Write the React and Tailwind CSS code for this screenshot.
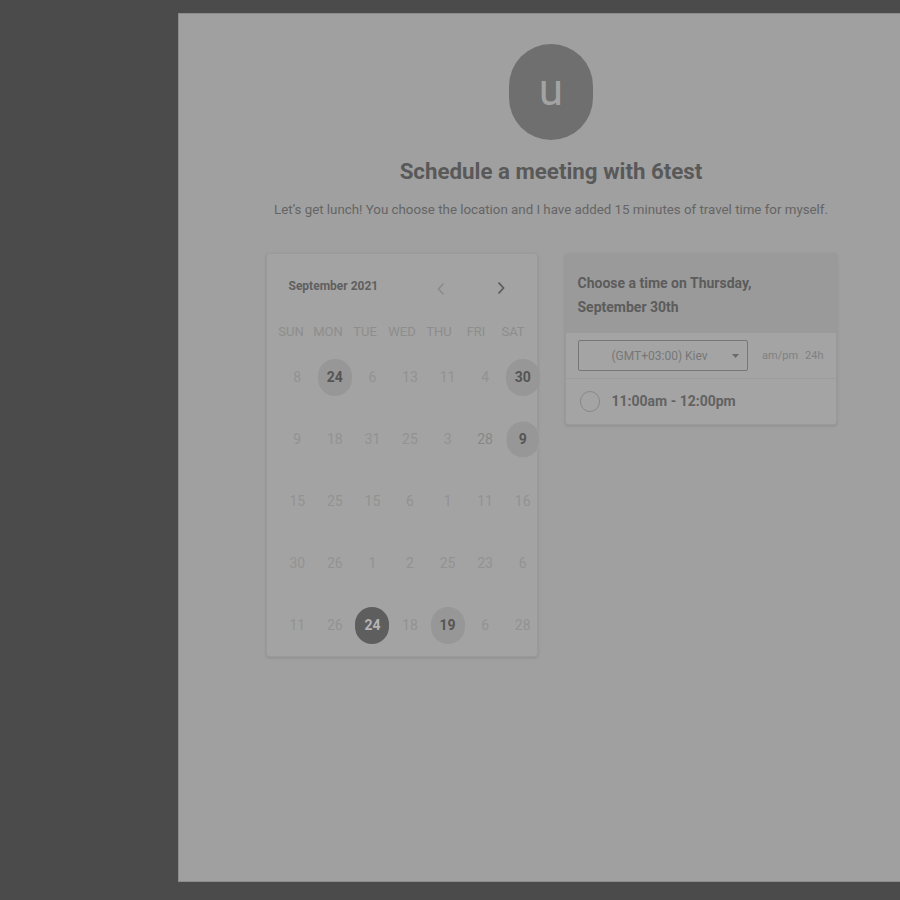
const weekdays = ["SUN", "MON", "TUE", "WED", "THU", "FRI", "SAT"];

// kind: "" faint, "a" available (light circle), "s" selected (dark circle), "d" a bit darker
const weeks = [
  [["8"], ["24", "a"], ["6"], ["13"], ["11"], ["4"], ["30", "a"]],
  [["9"], ["18"], ["31"], ["25"], ["3"], ["28", "d"], ["9", "r"]],
  [["15"], ["25"], ["15"], ["6"], ["1"], ["11"], ["16"]],
  [["30"], ["26"], ["1"], ["2"], ["25"], ["23"], ["6"]],
  [["11"], ["26"], ["24", "s"], ["18"], ["19", "a"], ["6"], ["28"]],
];

function Day({ value, kind }) {
  if (kind === "s") {
    return (
      <div className="flex h-[37px] w-[34px] items-center justify-center rounded-full bg-[#5e5e5e] text-[14px] font-bold text-[#b4b4b4]">
        {value}
      </div>
    );
  }
  if (kind === "a" || kind === "r") {
    return (
      <div
        className={
          "flex h-[37px] w-[34px] items-center justify-center rounded-full bg-[#979797] text-[14px] font-bold text-[#555]" +
          (kind === "r" ? " border border-dotted border-[#a8a8a8]" : "")
        }
      >
        {value}
      </div>
    );
  }
  return (
    <div className={"text-[14px] " + (kind === "d" ? "text-[#878787]" : "text-[#929292]")}>
      {value}
    </div>
  );
}

function Calendar() {
  return (
    <div className="w-[272px] h-[404px] rounded-[3px] border border-[#9a9a9a] bg-[#a3a3a3] shadow-[0_1px_3px_rgba(0,0,0,0.12)]">
      <div className="flex h-[62px] items-center pl-[22px] pt-[2px]">
        <span className="text-[12px] font-bold text-[#5f5f5f]">September 2021</span>
        <svg className="ml-[58px] mt-[6px]" width="10" height="14" viewBox="0 0 10 14">
          <path d="M7.5 1.5 L2.5 7 L7.5 12.5" fill="none" stroke="#8b8b8b" strokeWidth="1.6" />
        </svg>
        <svg className="ml-[50px] mt-[4px]" width="10" height="14" viewBox="0 0 10 14">
          <path d="M2.5 1.5 L7.5 7 L2.5 12.5" fill="none" stroke="#5c5c5c" strokeWidth="1.8" />
        </svg>
      </div>
      <div className="grid h-[30px] w-[265px] grid-cols-7 items-center pl-[6px]">
        {weekdays.map((d) => (
          <div key={d} className="text-center text-[13px] text-[#8d8d8d]">
            {d}
          </div>
        ))}
      </div>
      <div className="pl-[12px]">
        {weeks.map((row, i) => (
          <div key={i} className="grid h-[62px] w-[263px] grid-cols-7 items-center">
            {row.map(([v, k], j) => (
              <div key={j} className="flex justify-center">
                <Day value={v} kind={k} />
              </div>
            ))}
          </div>
        ))}
      </div>
    </div>
  );
}

function TimePanel() {
  return (
    <div className="w-[272px] overflow-hidden rounded-[3px] border border-[#9a9a9a] bg-[#a4a4a4] shadow-[0_1px_3px_rgba(0,0,0,0.12)]">
      <div className="bg-[#9a9a9a] px-[12px] pt-[17px] pb-[14px] text-[14px] font-bold leading-[24px] text-[#5c5c5c]">
        Choose a time on Thursday,
        <br />
        September 30th
      </div>
      <div className="flex items-center border-b border-[#9c9c9c] px-[12px] py-[7px]">
        <div className="relative flex h-[31px] w-[175px] items-center rounded-[2px] border border-[#777] pl-[33px] text-[12px] text-[#777]">
          (GMT+03:00) Kiev
          <svg className="absolute right-[8px] top-[13px]" width="7" height="4" viewBox="0 0 7 4">
            <path d="M0 0 L7 0 L3.5 4 Z" fill="#6a6a6a" />
          </svg>
        </div>
        <span className="ml-[14px] text-[11px] text-[#808080]">am/pm</span>
        <span className="ml-[7px] text-[11px] text-[#808080]">24h</span>
      </div>
      <div className="flex h-[45px] items-center px-[14px]">
        <div className="h-[21px] w-[20px] rounded-full border-[1.5px] border-[#888]" />
        <span className="ml-[12px] text-[14px] font-bold text-[#626262]">11:00am - 12:00pm</span>
      </div>
    </div>
  );
}

export default function App() {
  return (
    <div
      className="h-[900px] w-[900px] overflow-hidden bg-[#4b4b4b] pt-[13px] pl-[178px]"
      style={{ fontFamily: "Roboto, 'Liberation Sans', sans-serif" }}
    >
      <div className="h-[869px] w-[746px] border border-[#8c8c8c] bg-[#a0a0a0]">
        <div className="flex flex-col items-center pt-[30px]">
          <div className="flex h-[96px] w-[84px] items-center justify-center rounded-full bg-[#6f6f6f] pb-[4px] text-[44px] text-[#a3a3a3]">
            u
          </div>
          <h1 className="mt-[15px] text-[22.3px] font-bold text-[#595959]">
            Schedule a meeting with 6test
          </h1>
          <p className="mt-[12px] text-[13.3px] text-[#656565]">
            Let’s get lunch! You choose the location and I have added 15 minutes of travel time for myself.
          </p>
          <div className="mt-[33px] flex items-start gap-[27px]">
            <Calendar />
            <TimePanel />
          </div>
        </div>
      </div>
    </div>
  );
}
